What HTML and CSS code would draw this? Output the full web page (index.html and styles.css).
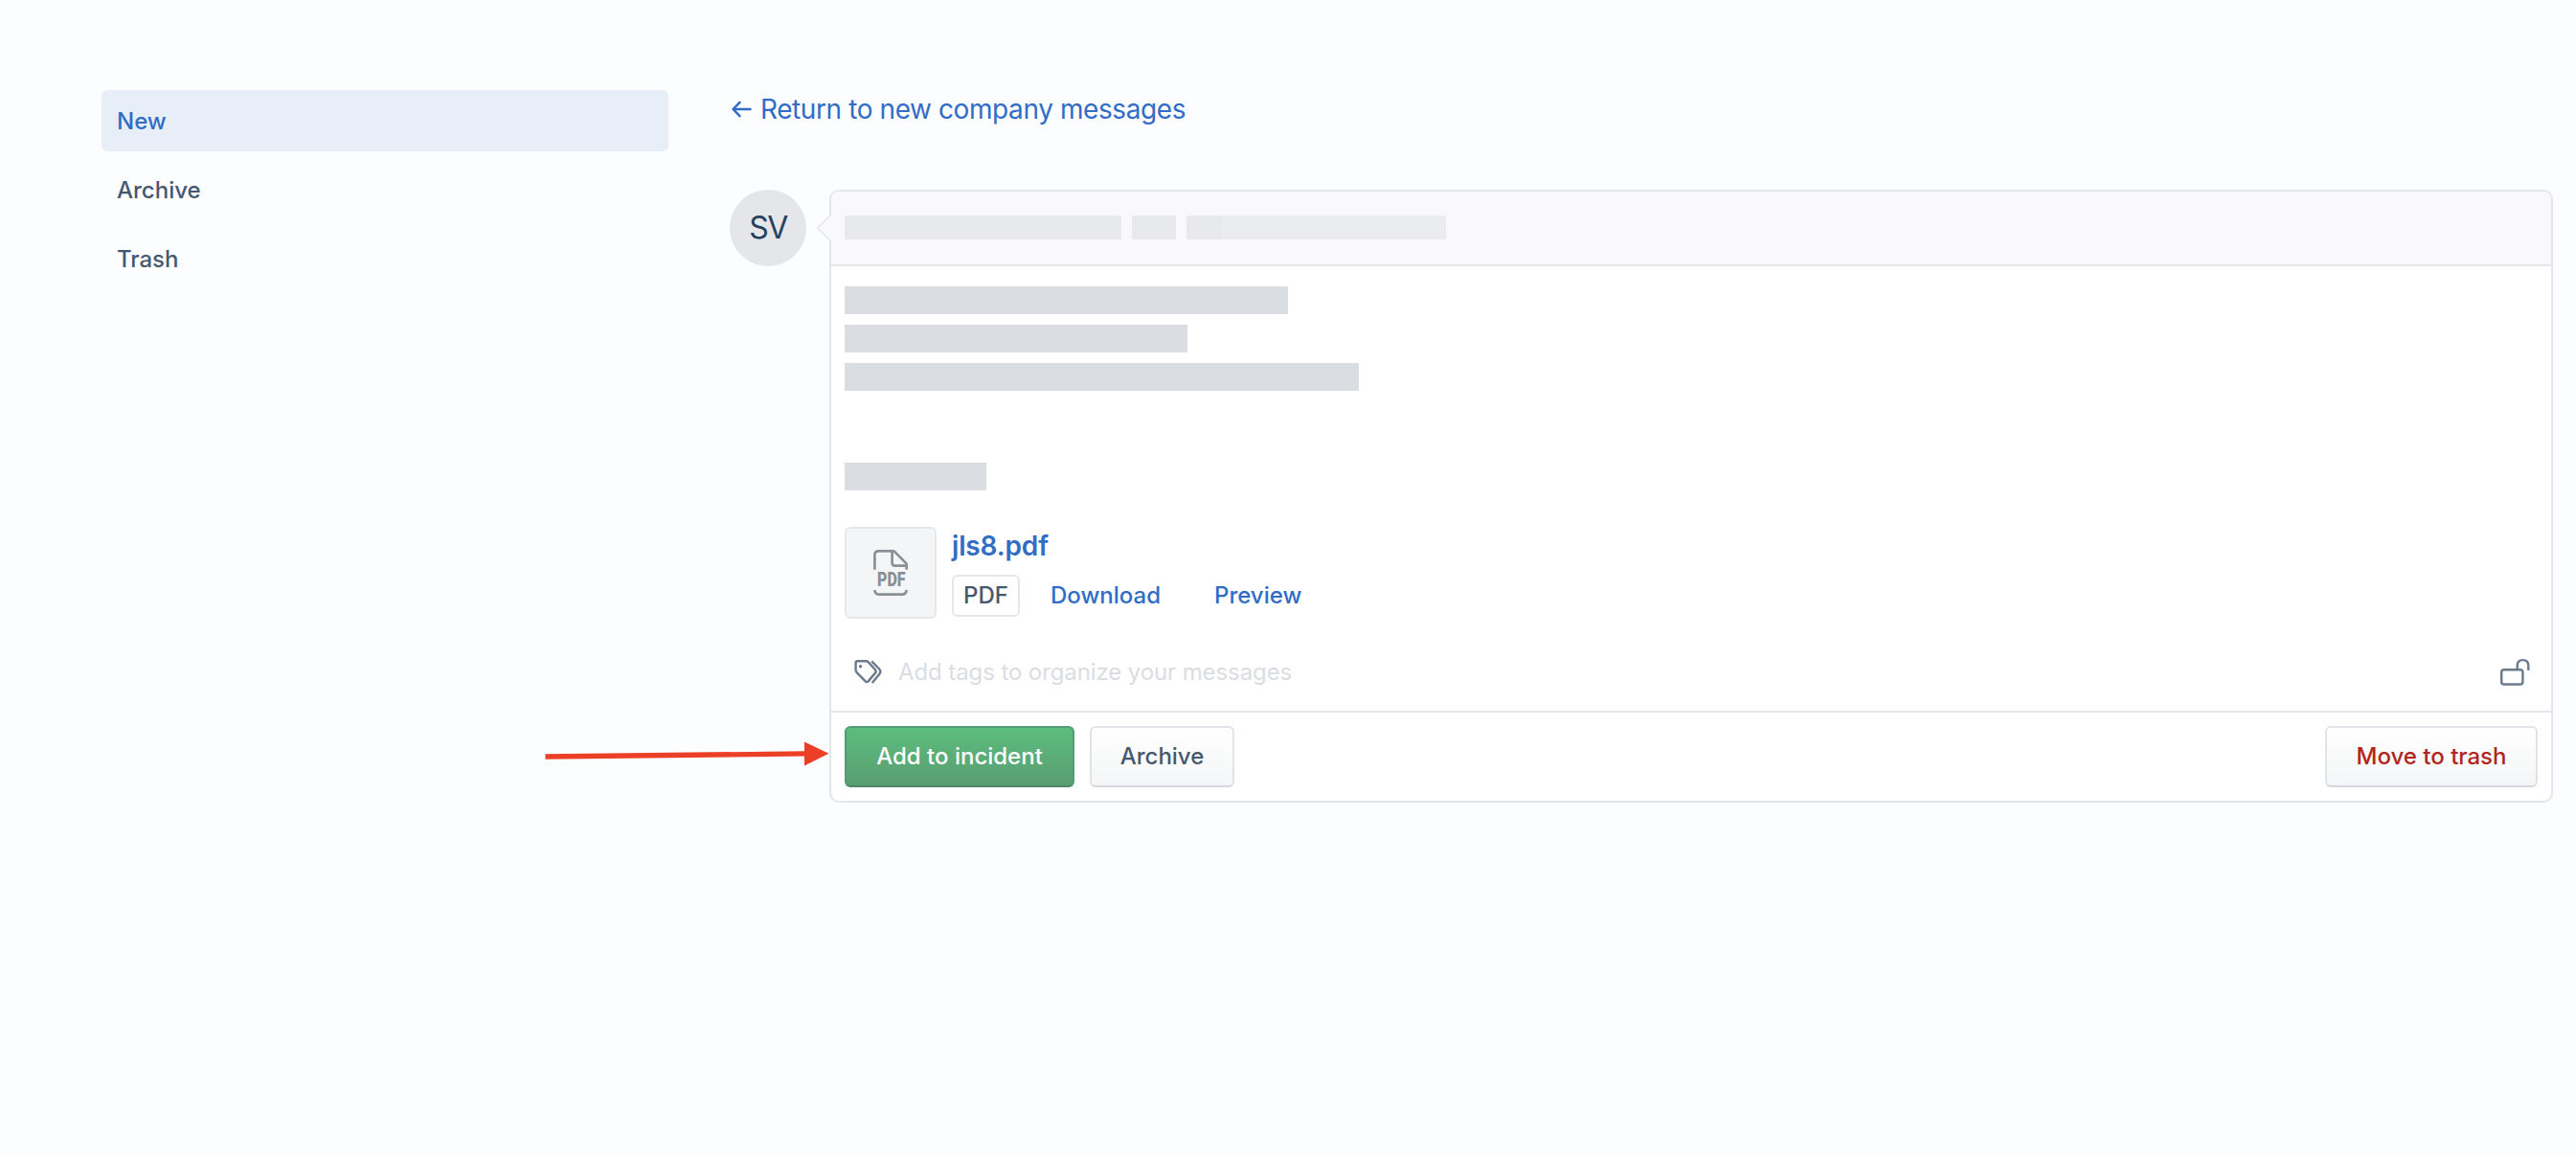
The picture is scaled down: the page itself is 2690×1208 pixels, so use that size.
FILE: index.html
```
<!DOCTYPE html>
<html lang="en">
<head>
<meta charset="utf-8">
<title>Company messages</title>
<link rel="stylesheet" href="styles.css">
</head>
<body>
<div class="page">
  <nav class="sidebar">
    <a class="nav-item active">New</a>
    <a class="nav-item">Archive</a>
    <a class="nav-item">Trash</a>
  </nav>
  <main>
    <a class="back">
      <svg class="back-icon" width="22" height="20" viewBox="0 0 22 20"><path d="M20.5 10H2.8M9.5 2.8L2.5 10l7 7.2"/></svg>
      <span>Return to new company messages</span>
    </a>
    <div class="message">
      <div class="avatar">SV</div>
      <section class="card">
        <svg class="notch" width="18" height="34" viewBox="0 0 18 34"><path class="notch-fill" d="M18 1.5L16 3 2 17l14 14 2 1.5z"/><path class="notch-line" d="M16.3 2.5L1.8 17l14.5 14.5"/></svg>
        <header class="card-header">
          <span class="bar sender"></span>
          <span class="bar link"></span>
          <span class="bar date"></span>
        </header>
        <div class="card-body">
          <span class="line" style="width:463px"></span>
          <span class="line" style="width:358px"></span>
          <span class="line" style="width:537px"></span>
          <span class="line signature" style="width:148px"></span>
          <div class="attachment">
            <div class="thumb">
              <svg width="36" height="48" viewBox="0 0 36 48">
                <path d="M1.4 20.8V5.6Q1.4 1.4 5.6 1.4H20.2Q21.6 1.4 22.6 2.4L34 13.9Q34.7 14.7 34.7 16V20.8M19.6 1.4V13.4Q19.6 16.6 22.8 16.6H34.4M1.4 42Q1.8 46.6 6 46.6H30Q34.2 46.6 34.7 42"/>
                <text x="4" y="38.4" textLength="29.5" lengthAdjust="spacingAndGlyphs">PDF</text>
              </svg>
            </div>
            <div>
              <div class="filename">jls8.pdf</div>
              <div class="file-actions">
                <span class="badge">PDF</span>
                <a class="action download">Download</a>
                <a class="action">Preview</a>
              </div>
            </div>
          </div>
        </div>
        <div class="tags">
          <svg width="30" height="28" viewBox="0 0 30 28"><path d="M1.6 4Q1.6 2.3 3.3 2.3H12.2Q13.7 2.3 14.8 3.4L21.8 11Q23.6 13 21.8 14.9L14.6 23.4Q13.2 24.9 11.7 23.4L2.7 14.2Q1.6 13 1.6 11.6ZM18.2 2.3L26.4 10.7Q28.4 13 26.5 15.4L18.8 25"/><circle cx="6.6" cy="7.7" r="1.7"/></svg>
          <span class="placeholder">Add tags to organize your messages</span>
          <svg class="lock" width="32" height="30" viewBox="0 0 32 30"><rect x="2.2" y="12.3" width="22.2" height="15.2" rx="2.6"/><path d="M18.7 12V8Q18.7 2.1 24.5 2.1T30.3 8V13"/></svg>
        </div>
        <footer class="card-footer">
          <button class="btn primary">Add to incident</button>
          <button class="btn archive">Archive</button>
          <button class="btn danger">Move to trash</button>
        </footer>
      </section>
    </div>
  </main>
</div>
<svg class="pointer" width="298" height="28" viewBox="0 0 298 28"><path d="M.5 14.2L272 11.3V16.5L.5 19.8z"/><path d="M271 1.6l25.5 12.2L271 26.6z"/></svg>
</body>
</html>
```

FILE: styles.css
```
* { box-sizing: border-box; }

body {
  margin: 0;
  min-height: 1208px;
  background: #fcfdff;
  color: #46586f;
  font: 500 24px/40px Inter, sans-serif;
}

.page {
  display: grid;
  grid-template-columns: 592px 1fr;
  column-gap: 64px;
  padding: 94px 24px 0 106px;
}

.sidebar {
  display: flex;
  flex-direction: column;
  gap: 8px;
}

.nav-item {
  height: 64px;
  padding: 1px 16px 0;
  border-radius: 6px;
  line-height: 64px;
}

.nav-item.active {
  background: #e8eef8;
  color: #316cc6;
}

.back {
  display: flex;
  align-items: center;
  gap: 9px;
  height: 40px;
  padding-left: 1px;
  color: #316cc6;
  font-size: 28px;
  font-weight: 400;
  letter-spacing: -0.41px;
}

.back-icon {
  fill: none;
  stroke: #316cc6;
  stroke-width: 2.5;
  stroke-linecap: round;
  stroke-linejoin: round;
}

.message {
  display: flex;
  gap: 24px;
  margin-top: 64px;
}

.avatar {
  flex: none;
  width: 80px;
  height: 80px;
  border-radius: 50%;
  background: #e5e6ea;
  color: #27415f;
  font-size: 32px;
  font-weight: 400;
  letter-spacing: -1.6px;
  line-height: 80px;
  text-align: center;
}

.card {
  position: relative;
  flex: 1;
  border: 2px solid #e5e6ea;
  border-radius: 10px;
  background: #fff;
}

.notch {
  position: absolute;
  left: -16px;
  top: 21px;
}

.notch-fill { fill: #f9f9fb; }

.notch-line {
  fill: none;
  stroke: #e5e6ea;
  stroke-width: 1.6;
}

.card-header {
  display: flex;
  align-items: center;
  height: 78px;
  padding: 0 14px 1px;
  border-bottom: 2px solid #e5e6ea;
  border-radius: 8px 8px 0 0;
  background: #f9f9fb;
}

.bar {
  height: 25px;
  background: #e8e9ec;
}

.sender { width: 289px; }

.link {
  width: 46px;
  margin: 0 11px;
}

.date {
  width: 271px;
  background: linear-gradient(90deg, #e8e9ec 37px, #ebecef 37px);
}

.card-body {
  display: flex;
  flex-direction: column;
  gap: 11px;
  padding: 21px 14px 16px;
}

.line {
  height: 29px;
  background: #dadde1;
}

.signature { margin-top: 64px; }

.attachment {
  display: flex;
  gap: 16px;
  margin-top: 27px;
}

.thumb {
  display: flex;
  align-items: center;
  justify-content: center;
  width: 96px;
  height: 96px;
  border: 2px solid #e5e8eb;
  border-radius: 6px;
  background: #f4f5f7;
}

.thumb svg { overflow: visible; }

.thumb path {
  fill: none;
  stroke: #8a9195;
  stroke-width: 2.7;
}

.thumb text {
  fill: #8a9195;
  font: 900 19.5px/1 Roboto, sans-serif;
}

.filename {
  height: 40px;
  color: #316cc6;
  font-size: 28px;
  font-weight: 600;
  letter-spacing: -0.15px;
}

.file-actions {
  display: flex;
  align-items: center;
  margin-top: 10px;
}

.badge {
  width: 71px;
  height: 44px;
  border: 2px solid #e5e8eb;
  border-radius: 6px;
  text-align: center;
}

.action {
  margin-left: 56px;
  color: #316cc6;
}

.download { margin-left: 32px; }

.tags {
  display: flex;
  align-items: center;
  height: 80px;
  padding: 0 22px 0 24px;
}

.tags svg {
  fill: none;
  stroke: #6b7a8d;
  stroke-width: 2.4;
}

.tags circle {
  fill: #6b7a8d;
  stroke: none;
}

.placeholder {
  margin-left: 16px;
  color: #dadde2;
  font-weight: 400;
  letter-spacing: -0.1px;
}

.lock { margin-left: auto; }

.card-footer {
  display: flex;
  gap: 16px;
  padding: 14px;
  height: 94px;
  border-top: 2px solid #e5e6ea;
}

.btn {
  height: 64px;
  padding: 0;
  border: 2px solid #e0e4e8;
  border-bottom-color: #d5d9de;
  border-radius: 6px;
  background: linear-gradient(#fff, #f4f5f6);
  color: #46586f;
  font: inherit;
  line-height: 60px;
}

.primary {
  width: 240px;
  border-color: #529d73;
  border-bottom-color: #4f8767;
  background: linear-gradient(#5dbd7d, #599d72);
  color: #fff;
}

.archive { width: 151px; }

.danger {
  width: 222px;
  margin-left: auto;
  color: #b0261c;
}

.pointer {
  position: absolute;
  left: 569px;
  top: 773px;
  fill: #eb4027;
}
```
